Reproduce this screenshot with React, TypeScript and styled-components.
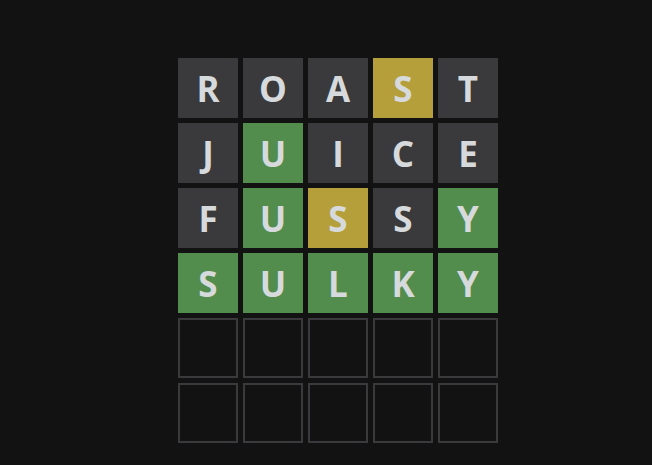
import React from "react";
import styled, { createGlobalStyle } from "styled-components";

const Global = createGlobalStyle`
  html, body { margin: 0; padding: 0; background: #121213; }
  body { font-family: "Open Sans", "DejaVu Sans", sans-serif; }
`;

const Page = styled.main`
  width: 652px;
  height: 465px;
  box-sizing: border-box;
  background: #121213;
  padding: 58px 0 0 178px;
`;

const Board = styled.div`
  display: grid;
  grid-template-columns: repeat(5, 60px);
  grid-auto-rows: 60px;
  gap: 5px;
`;

type State = "absent" | "present" | "correct" | "empty";

const colors: Record<State, string> = {
  absent: "#3a3a3c",
  present: "#b59f3b",
  correct: "#538d4e",
  empty: "transparent",
};

const Tile = styled.div<{ $state: State }>`
  box-sizing: border-box;
  display: flex;
  align-items: center;
  justify-content: center;
  background: ${(p) => colors[p.$state]};
  border: ${(p) => (p.$state === "empty" ? "2px solid #3a3a3c" : "none")};
  color: #d7dadc;
  font-weight: 700;
  font-size: 35px;
  line-height: 1;
  text-transform: uppercase;
`;

const rows: [string, string][] = [
  ["ROAST", "aaapa"],
  ["JUICE", "acaaa"],
  ["FUSSY", "acpac"],
  ["SULKY", "ccccc"],
  ["     ", "eeeee"],
  ["     ", "eeeee"],
];

const map: Record<string, State> = { a: "absent", p: "present", c: "correct", e: "empty" };

export default function App() {
  return (
    <>
      <Global />
      <Page>
        <Board>
          {rows.map(([word, st], r) =>
            word.split("").map((ch, i) => (
              <Tile key={`${r}-${i}`} $state={map[st[i]]}>
                {ch.trim()}
              </Tile>
            ))
          )}
        </Board>
      </Page>
    </>
  );
}
